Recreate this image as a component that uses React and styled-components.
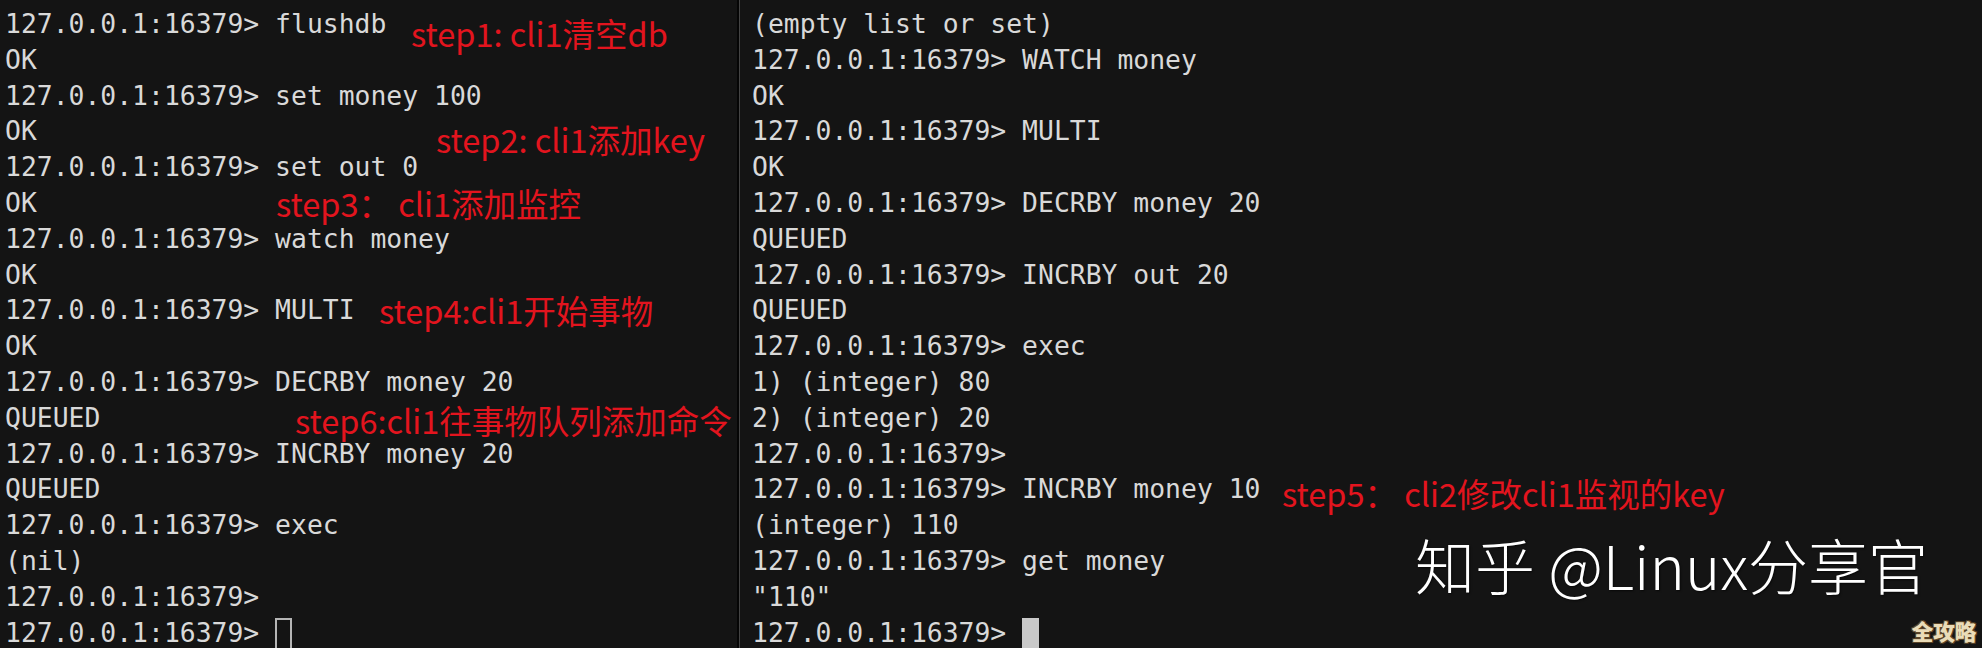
import React from "react";
import styled, { createGlobalStyle } from "styled-components";

const GlobalStyle = createGlobalStyle`
  html, body {
    margin: 0;
    padding: 0;
    background: #141414;
    overflow: hidden;
  }
`;

const PROMPT = "127.0.0.1:16379> ";

const Screen = styled.div`
  position: relative;
  display: flex;
  width: 1982px;
  height: 648px;
  background: #141414;
  overflow: hidden;
`;

const Pane = styled.div`
  display: flex;
  flex-direction: column;
  width: ${(p) => p.$width};
  flex: ${(p) => (p.$grow ? 1 : "none")};
  padding: 6px 0 0 ${(p) => p.$padLeft}px;
  box-sizing: border-box;
`;

const Divider = styled.div`
  width: 2px;
  margin-right: 2px;
  background: #050505;
  border-right: 1px solid #444;
  flex: none;
`;

const Line = styled.div`
  position: relative;
  height: 35.8px;
  line-height: 35.8px;
  font-family: "DejaVu Sans Mono", "Liberation Mono", monospace;
  font-size: 26.4px;
  color: #d9d9d9;
  white-space: pre;
`;

const Cursor = styled.span`
  display: inline-block;
  vertical-align: top;
  margin-top: 3px;
  width: 17px;
  height: 34px;
  box-sizing: border-box;
  ${(p) =>
    p.$filled
      ? "background: #c9c9c9;"
      : "border: 2px solid #b5b5b5;"}
`;

const Note = styled.span`
  position: absolute;
  left: ${(p) => p.$x}px;
  top: calc(50% + ${(p) => p.$dy}px);
  transform: translateY(-50%);
  font-family: "Noto Sans CJK SC", "Noto Sans", sans-serif;
  font-weight: 400;
  font-size: 32.5px;
  line-height: 1;
  color: #e3141e;
  white-space: pre;
`;

const Watermark = styled.div`
  position: absolute;
  right: 54px;
  top: 528px;
  font-family: "Noto Sans CJK SC", "Noto Sans", sans-serif;
  font-weight: 300;
  font-size: 60px;
  line-height: 1.2;
  color: #ffffff;
  text-shadow: 1px 1px 2px rgba(0, 0, 0, 0.6);
  white-space: pre;
`;

const Badge = styled.div`
  position: absolute;
  right: 6px;
  bottom: 6px;
  font-family: "Noto Sans CJK SC", sans-serif;
  font-weight: 900;
  font-size: 22px;
  line-height: 1.1;
  letter-spacing: -0.5px;
  color: #eadcb8;
  text-shadow: -1px -1px 0 #5a4428, 1px -1px 0 #5a4428, -1px 1px 0 #5a4428,
    1px 1px 0 #5a4428;
`;

const leftLines = [
  { text: PROMPT + "flushdb", note: { text: "step1: cli1清空db", x: 406, dy: 9 } },
  { text: "OK" },
  { text: PROMPT + "set money 100" },
  { text: "OK", note: { text: "step2: cli1添加key", x: 431, dy: 8 } },
  { text: PROMPT + "set out 0" },
  { text: "OK", note: { text: "step3： cli1添加监控", x: 271, dy: 0 } },
  { text: PROMPT + "watch money" },
  { text: "OK" },
  { text: PROMPT + "MULTI", note: { text: "step4:cli1开始事物", x: 374, dy: 0 } },
  { text: "OK" },
  { text: PROMPT + "DECRBY money 20" },
  { text: "QUEUED", note: { text: "step6:cli1往事物队列添加命令", x: 290, dy: 2 } },
  { text: PROMPT + "INCRBY money 20" },
  { text: "QUEUED" },
  { text: PROMPT + "exec" },
  { text: "(nil)" },
  { text: PROMPT },
  { text: PROMPT, cursor: "hollow" },
];

const rightLines = [
  { text: "(empty list or set)" },
  { text: PROMPT + "WATCH money" },
  { text: "OK" },
  { text: PROMPT + "MULTI" },
  { text: "OK" },
  { text: PROMPT + "DECRBY money 20" },
  { text: "QUEUED" },
  { text: PROMPT + "INCRBY out 20" },
  { text: "QUEUED" },
  { text: PROMPT + "exec" },
  { text: "1) (integer) 80" },
  { text: "2) (integer) 20" },
  { text: PROMPT },
  { text: PROMPT + "INCRBY money 10", note: { text: "step5： cli2修改cli1监视的key", x: 530, dy: 4 } },
  { text: "(integer) 110" },
  { text: PROMPT + "get money" },
  { text: '"110"' },
  { text: PROMPT, cursor: "filled" },
];

const Terminal = ({ lines }) =>
  lines.map((line, i) => (
    <Line key={i}>
      {line.text}
      {line.cursor && <Cursor $filled={line.cursor === "filled"} />}
      {line.note && (
        <Note $x={line.note.x} $dy={line.note.dy}>
          {line.note.text}
        </Note>
      )}
    </Line>
  ));

const App = () => (
  <>
    <GlobalStyle />
    <Screen>
      <Pane $width="737px" $padLeft={5}>
        <Terminal lines={leftLines} />
      </Pane>
      <Divider />
      <Pane $grow $padLeft={10}>
        <Terminal lines={rightLines} />
      </Pane>
      <Watermark>知乎 @Linux分享官</Watermark>
      <Badge>全攻略</Badge>
    </Screen>
  </>
);

export default App;
